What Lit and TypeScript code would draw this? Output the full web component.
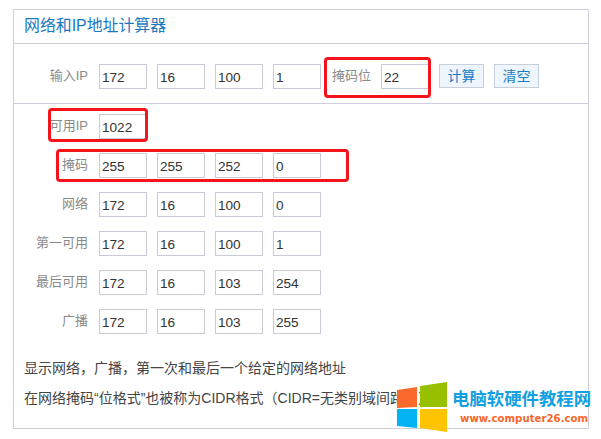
import { LitElement, html, css } from "lit";
import { customElement } from "lit/decorators.js";

const rows: [string, string[]][] = [
  ["可用IP", ["1022"]],
  ["掩码", ["255", "255", "252", "0"]],
  ["网络", ["172", "16", "100", "0"]],
  ["第一可用", ["172", "16", "100", "1"]],
  ["最后可用", ["172", "16", "103", "254"]],
  ["广播", ["172", "16", "103", "255"]],
];

@customElement("app-root")
export class AppRoot extends LitElement {
  static styles = css`
    :host {
      display: block;
      position: relative;
      width: 601px;
      height: 439px;
      overflow: hidden;
      background: #fff;
      font-family: "Liberation Sans", "Noto Sans CJK SC", sans-serif;
      font-size: 14px;
      color: #333;
    }
    .card {
      box-sizing: border-box;
      margin: 9px 0 0 13px;
      width: 576px;
      height: 420px;
      border: 1px solid #cdd0dc;
    }
    .title {
      box-sizing: border-box;
      height: 34px;
      padding: 6px 0 0 10px;
      font-size: 15.9px;
      line-height: 20px;
      color: #1a78bf;
      border-bottom: 1px solid #cdd0dc;
    }
    .top {
      box-sizing: border-box;
      height: 60px;
      padding-top: 20px;
      border-bottom: 1px solid #cdd0dc;
    }
    .rows {
      display: flex;
      flex-direction: column;
      gap: 14px;
      padding-top: 10px;
    }
    .row {
      display: flex;
      align-items: flex-start;
      height: 25px;
    }
    .label {
      width: 74px;
      text-align: right;
      font-size: 13px;
      color: #8a8a8a;
      line-height: 24px;
      flex: none;
    }
    .fields {
      display: flex;
      gap: 10px;
      margin-left: 11px;
    }
    .box {
      box-sizing: border-box;
      width: 48px;
      height: 25px;
      padding-left: 2px;
      border: 1px solid #c9ccd8;
      font-size: 13.6px;
      line-height: 25px;
      color: #333;
      background: #fff;
    }
    .mask {
      margin-left: 11px;
      width: 49px;
      font-size: 13px;
      color: #8a8a8a;
      line-height: 24px;
      flex: none;
    }
    .btn {
      box-sizing: border-box;
      height: 24px;
      width: 45px;
      margin-left: 10px;
      border: 1px solid #c5d0dc;
      background: #eff5fc;
      color: #1a7cc4;
      font-size: 14px;
      line-height: 23px;
      text-align: center;
    }
    .notes {
      padding: 24px 0 0 10px;
      white-space: nowrap;
      color: #444;
    }
    .notes p {
      margin: 0 0 10px;
      line-height: 20px;
    }
    .mark {
      position: absolute;
      box-sizing: border-box;
      border: 3px solid #f5141c;
      border-radius: 4px;
    }
    .m1 { left: 48px; top: 108px; width: 100px; height: 34px; }
    .m2 { left: 56px; top: 149px; width: 293px; height: 33px; }
    .m3 { left: 324px; top: 57px; width: 107px; height: 41px; }
    .logo {
      position: absolute;
      left: 396px;
      top: 381px;
    }
    .wm1 {
      position: absolute;
      left: 452px;
      top: 388px;
      font-size: 17.4px;
      line-height: 22px;
      font-weight: 700;
      color: #12a0e0;
      white-space: nowrap;
    }
    .wm2 {
      position: absolute;
      left: 460px;
      top: 412px;
      font-family: "DejaVu Sans", sans-serif;
      font-size: 10.2px;
      line-height: 14px;
      font-weight: 700;
      color: #f4682c;
      white-space: nowrap;
    }
  `;

  private fields(values: string[]) {
    return html`<div class="fields">${values.map((v) => html`<div class="box">${v}</div>`)}</div>`;
  }

  render() {
    return html`
      <div class="card">
        <div class="title">网络和IP地址计算器</div>
        <div class="top">
          <div class="row">
            <div class="label">输入IP</div>
            ${this.fields(["172", "16", "100", "1"])}
            <div class="mask">掩码位</div>
            <div class="box">22</div>
            <div class="btn">计算</div>
            <div class="btn">清空</div>
          </div>
        </div>
        <div class="rows">
          ${rows.map(
            ([label, values]) => html`<div class="row">
              <div class="label">${label}</div>
              ${this.fields(values)}
            </div>`
          )}
        </div>
        <div class="notes">
          <p>显示网络，广播，第一次和最后一个给定的网络地址</p>
          <p>在网络掩码“位格式”也被称为CIDR格式（CIDR=无类别域间路由）</p>
        </div>
      </div>
      <div class="mark m1"></div>
      <div class="mark m2"></div>
      <div class="mark m3"></div>
      <svg class="logo" width="52" height="52" viewBox="396 381 52 52">
        <polygon points="397,390 417,387 417,407 397,408" fill="#fb6a2c" />
        <polygon points="420,386 447,382 447,407 420,407" fill="#97c000" />
        <polygon points="397,409 417,409 417,428 397,426" fill="#00b4f4" />
        <polygon points="420,409 447,409 447,432 420,428" fill="#ffc300" />
      </svg>
      <div class="wm1">电脑软硬件教程网</div>
      <div class="wm2">www.computer26.com</div>
    `;
  }
}
